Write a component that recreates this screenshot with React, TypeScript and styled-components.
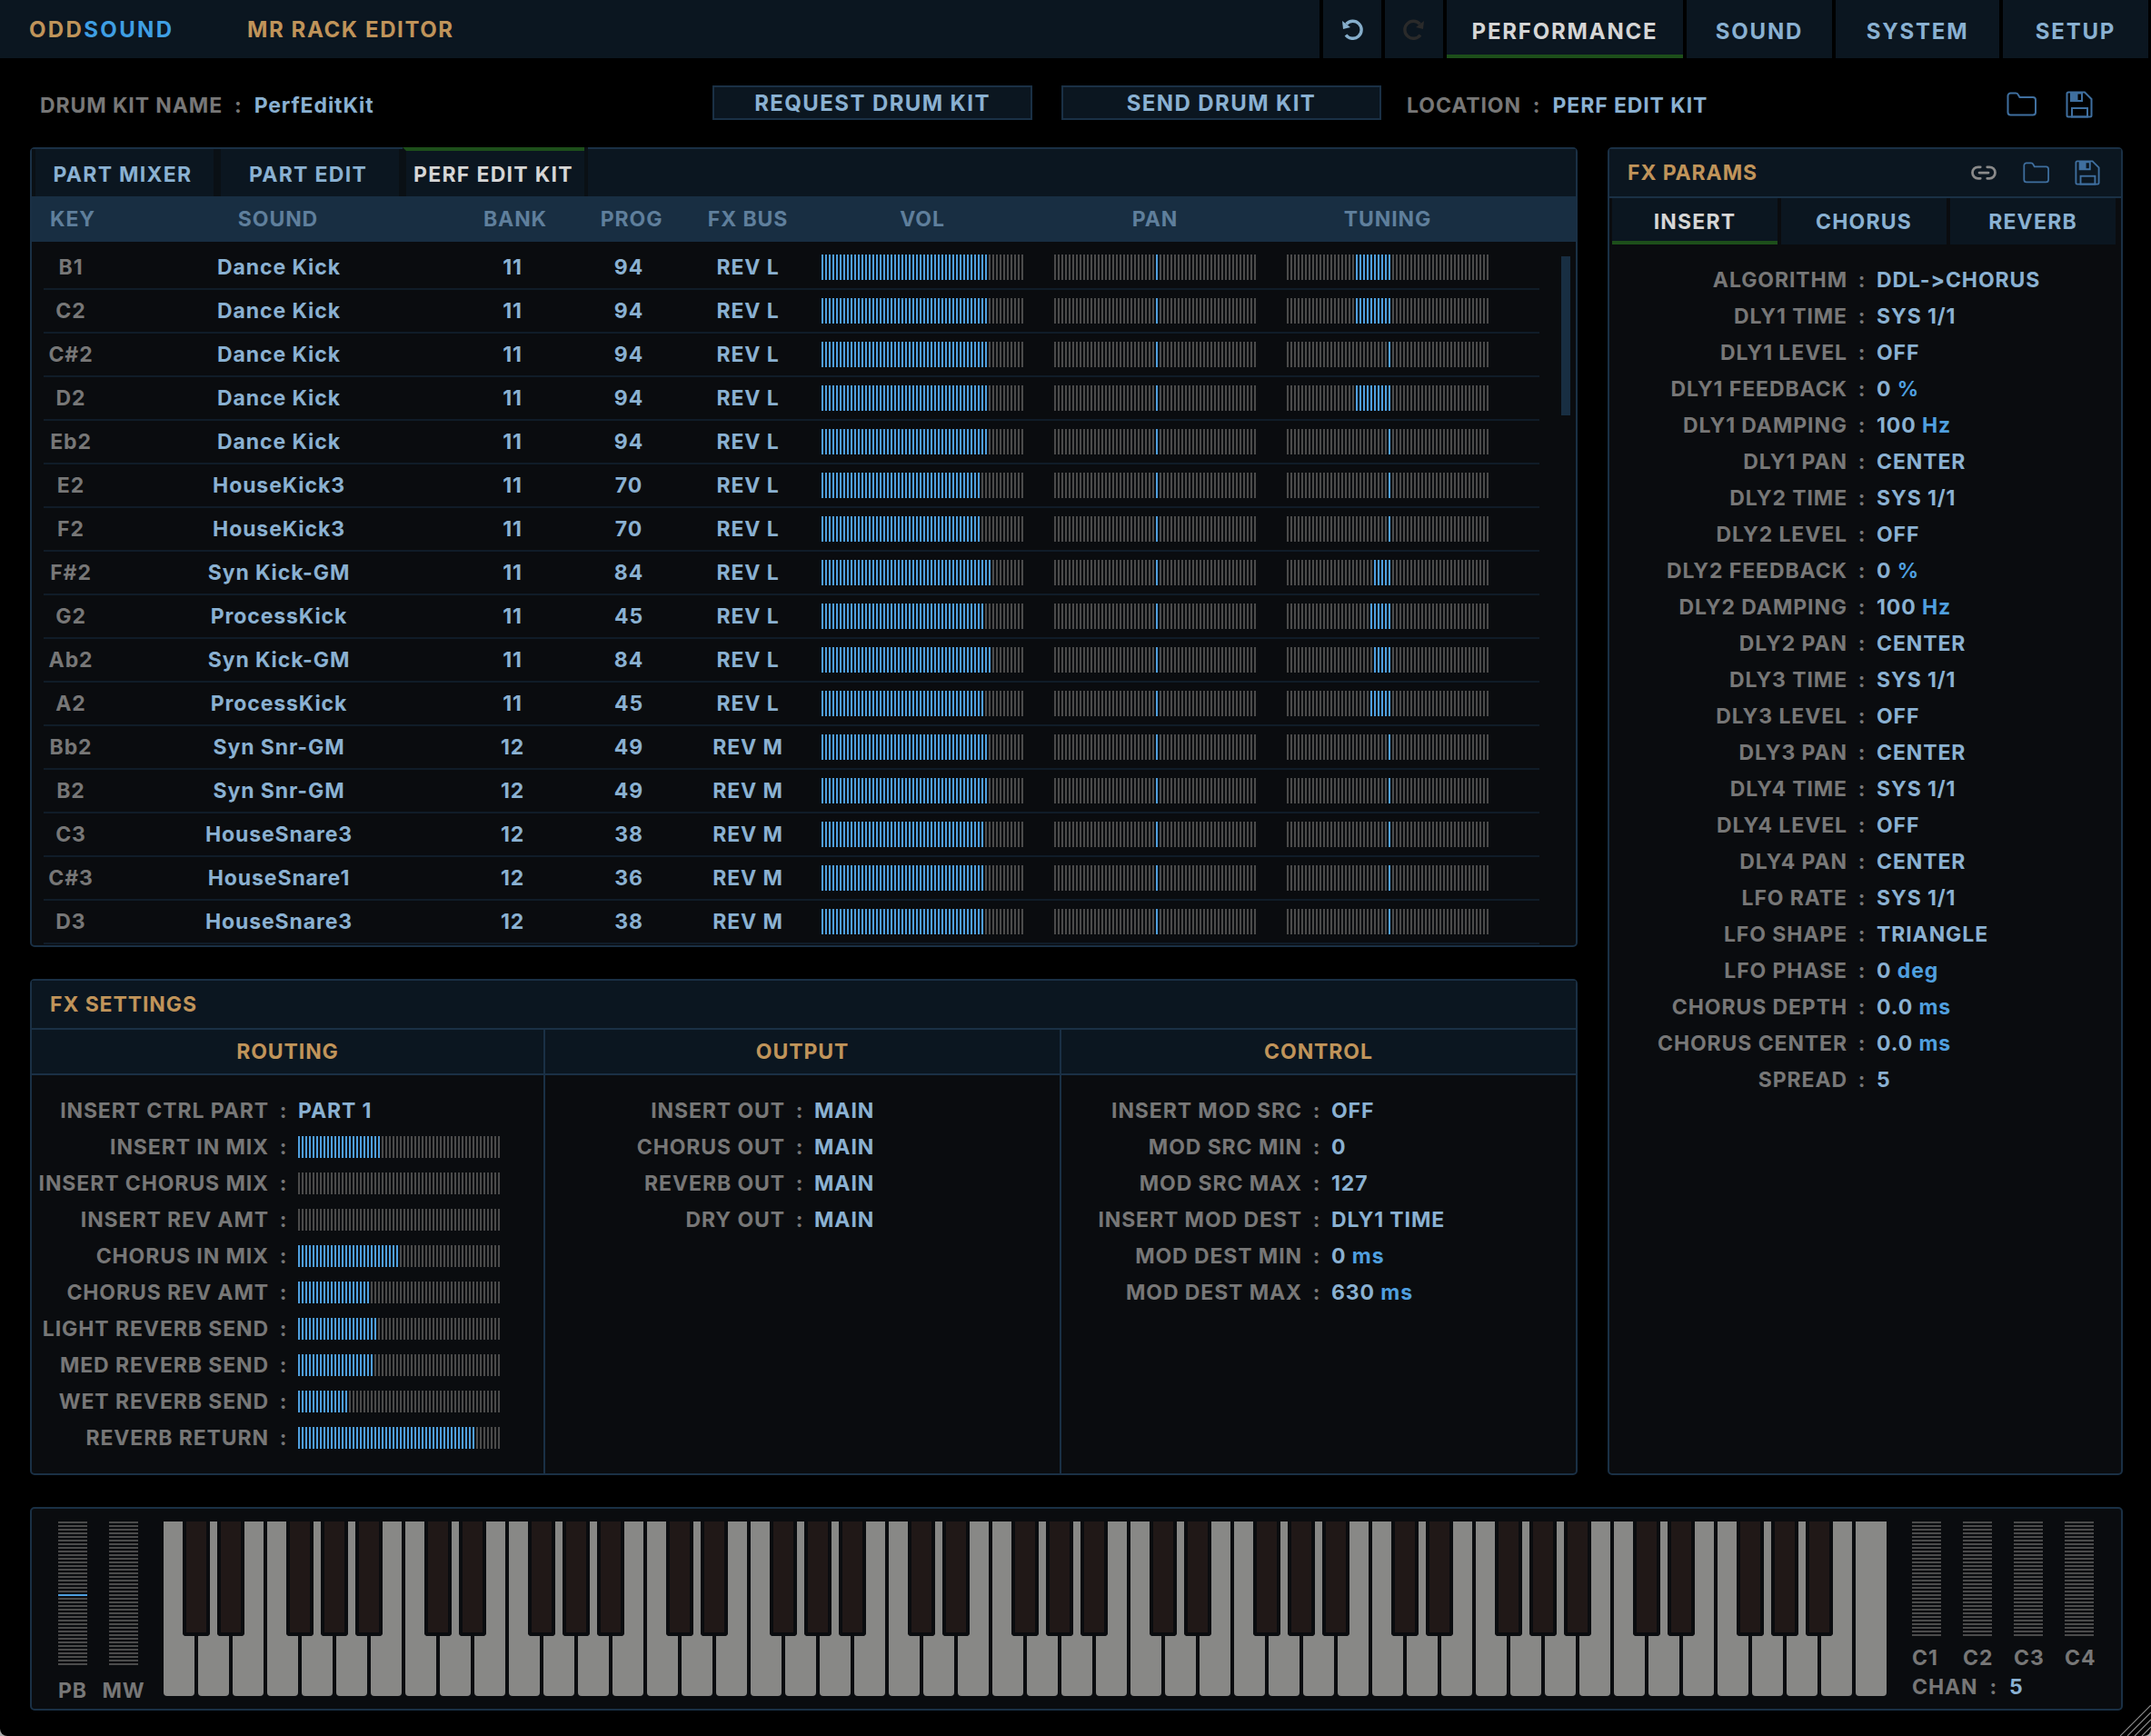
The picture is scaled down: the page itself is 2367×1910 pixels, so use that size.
import styled, { createGlobalStyle } from "styled-components";

const Global = createGlobalStyle`
  html, body {
    margin: 0;
    background: #a8a8a8;
  }
  * {
    box-sizing: border-box;
  }
`;

const TICK = "#4b4b4b";
const BLUE = "#4f9fdf";
const LINE = "#1a3045";
const BAR_BG = "#0b1620";
const BODY_BG = "#0a0c0f";
const VALUE = "#8ab1d2";
const LABEL = "#777777";
const ORANGE = "#c0945a";

const Window = styled.div`
  position: relative;
  width: 2367px;
  height: 1910px;
  background: #000;
  border-radius: 0 0 8px 8px;
  overflow: hidden;
  font-family: Inter, "Liberation Sans", sans-serif;
  font-weight: 700;
  font-size: 23px;
  letter-spacing: 0.9px;
  color: ${LABEL};
`;

const TopBar = styled.header`
  display: flex;
  gap: 4px;
  height: 64px;
  padding-right: 3px;
`;

const TitleArea = styled.div`
  flex: 1;
  display: flex;
  align-items: center;
  padding: 1px 0 0 32px;
  background: ${BAR_BG};
  font-size: 24px;
  letter-spacing: 1.6px;
  color: ${ORANGE};
`;

const Logo = styled.span`
  width: 240px;
  letter-spacing: 2.35px;
  span {
    color: #3f9fe4;
  }
`;

const NavIcon = styled.button`
  display: flex;
  align-items: center;
  justify-content: center;
  width: 64px;
  padding: 0;
  border: 0;
  background: ${BAR_BG};
`;

const NavTab = styled.button<{ $w: number; $active?: boolean }>`
  width: ${(p) => p.$w}px;
  padding: 8px 0 0;
  border: 0;
  border-bottom: 4px solid ${(p) => (p.$active ? "#1d4f1a" : BAR_BG)};
  background: ${BAR_BG};
  font: inherit;
  font-size: 24px;
  letter-spacing: 1.8px;
  color: ${(p) => (p.$active ? "#d6d6d6" : VALUE)};
`;

const KitBar = styled.div`
  display: flex;
  align-items: center;
  height: 98px;
  padding-left: 44px;
`;

const KitInfo = styled.div<{ $w?: number; $ml?: number }>`
  display: flex;
  flex: ${(p) => (p.$w ? `0 0 ${p.$w}px` : "1")};
  margin-left: ${(p) => p.$ml ?? 0}px;
  padding-top: 6px;
`;

const Colon = styled.span`
  margin: 0 13px;
`;

const Value = styled.span`
  color: ${VALUE};
`;

const Unit = styled.span`
  color: ${BLUE};
`;

const KitButton = styled.button`
  width: 352px;
  height: 38px;
  margin-right: 32px;
  padding: 0;
  border: 2px solid ${LINE};
  background: ${BAR_BG};
  font: inherit;
  font-size: 24px;
  letter-spacing: 1.4px;
  color: ${VALUE};
`;

const KitIcons = styled.div`
  display: flex;
  align-items: center;
  gap: 32px;
  margin: 3px 64px 0 -4px;
`;

const Main = styled.div`
  display: flex;
  gap: 33px;
  height: 1461px;
  padding-left: 33px;
`;

const LeftColumn = styled.div`
  display: flex;
  flex-direction: column;
  gap: 35px;
  width: 1703px;
`;

const Panel = styled.section<{ $h?: number; $w?: number }>`
  display: flex;
  flex-direction: column;
  ${(p) => (p.$h ? `height: ${p.$h}px;` : "")}
  ${(p) => (p.$w ? `width: ${p.$w}px;` : "")}
  border: 2px solid ${LINE};
  border-radius: 5px;
  background: ${BODY_BG};
`;

const TabBar = styled.div`
  display: flex;
  flex: 0 0 52px;
  background: ${BAR_BG};
`;

const PartTab = styled.button<{ $w: number; $ml?: number; $active?: boolean }>`
  width: ${(p) => p.$w}px;
  margin-left: ${(p) => p.$ml ?? 0}px;
  margin-top: ${(p) => (p.$active ? "-2px" : "0")};
  padding: ${(p) => (p.$active ? "2px" : "4px")} 4px 0 0;
  border: 0;
  border-top: ${(p) => (p.$active ? "4px solid #1d4f1a" : "0")};
  border-left: 4px solid #0a1015;
  background: ${BAR_BG};
  font: inherit;
  letter-spacing: 1.3px;
  color: ${(p) => (p.$active ? "#d6d6d6" : VALUE)};
  box-shadow: 4px 0 0 #0a1015;
`;

const HeadRow = styled.div`
  display: flex;
  align-items: center;
  flex: 0 0 50px;
  padding-left: 13px;
  background: #182e42;
  color: #5f7f9c;
`;

const Cell = styled.div<{ $w: number; $tone?: "key" | "value" }>`
  flex: 0 0 ${(p) => p.$w}px;
  text-align: center;
  color: ${(p) => (p.$tone === "key" ? LABEL : p.$tone === "value" ? VALUE : "inherit")};
`;

const BarGroup = styled.div<{ $ml: number }>`
  display: grid;
  grid-template-columns: repeat(3, 222px);
  column-gap: 34px;
  margin-left: ${(p) => p.$ml}px;
  text-align: center;
`;

const TableBody = styled.div`
  position: relative;
  flex: 1;
  padding: 5px 40px 0 13px;
`;

const TableRow = styled.div`
  display: flex;
  align-items: center;
  height: 48px;
  border-bottom: 2px solid #101c28;
`;

const Scroll = styled.div`
  position: absolute;
  top: 16px;
  right: 6px;
  width: 10px;
  height: 175px;
  background: #182e42;
`;

const Track = styled.div<{ $h: number; $w?: number }>`
  position: relative;
  width: ${(p) => p.$w ?? 222}px;
  height: ${(p) => p.$h}px;
  background: repeating-linear-gradient(90deg, ${TICK} 0 2px, transparent 2px 4px);
`;

const Fill = styled.div`
  position: absolute;
  top: 0;
  bottom: 0;
  background: repeating-linear-gradient(90deg, ${BLUE} 0 2px, transparent 2px 4px);
`;

const PanelTitle = styled.div`
  display: flex;
  align-items: center;
  flex: 0 0 54px;
  padding-left: 20px;
  border-bottom: 2px solid ${LINE};
  background: ${BAR_BG};
  color: ${ORANGE};
`;

const Columns = styled.div`
  display: grid;
  flex: 1;
  grid-template-columns: 563px 568px 1fr;
`;

const Column = styled.div<{ $divider?: boolean }>`
  display: flex;
  flex-direction: column;
  border-left: ${(p) => (p.$divider ? `2px solid ${LINE}` : "0")};
`;

const ColumnHead = styled.div`
  flex: 0 0 50px;
  border-bottom: 2px solid ${LINE};
  background: ${BAR_BG};
  color: ${ORANGE};
  line-height: 48px;
  text-align: center;
`;

const ParamList = styled.div`
  padding-top: 19px;
`;

const ParamRow = styled.div<{ $labelW: number }>`
  display: grid;
  grid-template-columns: ${(p) => p.$labelW}px 32px 1fr;
  align-items: center;
  height: 40px;
  white-space: pre;
`;

const ParamLabel = styled.span`
  text-align: right;
`;

const ParamColon = styled.span`
  text-align: center;
`;

const TitleIcons = styled.div`
  display: flex;
  align-items: center;
  gap: 28px;
  margin-left: auto;
  margin-right: 23px;
`;

const FxTabs = styled.div`
  display: flex;
  flex: 0 0 51px;
  gap: 4px;
  padding-left: 3px;
`;

const FxTab = styled.button<{ $active?: boolean }>`
  width: 182px;
  padding: 4px 0 0;
  border: 0;
  border-bottom: 4px solid ${(p) => (p.$active ? "#1d4f1a" : BAR_BG)};
  background: ${BAR_BG};
  font: inherit;
  letter-spacing: 1.2px;
  color: ${(p) => (p.$active ? "#d6d6d6" : VALUE)};
`;

const KeyboardPanel = styled.section`
  display: flex;
  width: 2303px;
  height: 224px;
  margin: 35px 0 0 33px;
  padding: 14px 0 0 29px;
  border: 2px solid ${LINE};
  border-radius: 5px;
  background: ${BODY_BG};
`;

const Wheels = styled.div`
  display: grid;
  grid-template-columns: 32px 32px;
  column-gap: 24px;
  width: 116px;
  justify-items: center;
  align-content: start;
`;

const HTicks = styled.div<{ $h: number }>`
  position: relative;
  width: 32px;
  height: ${(p) => p.$h}px;
  background: repeating-linear-gradient(180deg, ${TICK} 0 2px, transparent 2px 4px);
`;

const WheelMark = styled.div`
  position: absolute;
  left: 0;
  right: 0;
  height: 2px;
  background: ${BLUE};
`;

const WheelName = styled.div`
  margin-top: 15px;
  line-height: 26px;
  text-align: center;
`;

const Keys = styled.div`
  position: relative;
  display: flex;
  gap: 4px;
  height: 192px;
`;

const WhiteKey = styled.div`
  width: 34px;
  border-radius: 0 0 4px 4px;
  background: #888886;
`;

const BlackKey = styled.div`
  position: absolute;
  top: 0;
  width: 30px;
  height: 126px;
  border: 4px solid #0a0c0f;
  border-top: 0;
  border-radius: 0 0 4px 4px;
  background: #201817;
`;

const Meters = styled.div`
  display: flex;
  flex-direction: column;
  margin-left: 28px;
`;

const MeterGrid = styled.div`
  display: grid;
  grid-template-columns: repeat(4, 32px);
  column-gap: 24px;
`;

const MeterName = styled.div`
  margin-top: 11px;
  line-height: 26px;
  white-space: nowrap;
`;

const ChanRow = styled.div`
  display: flex;
  margin-top: 6px;
  line-height: 26px;
`;

const Grip = styled.svg`
  position: absolute;
  right: 0;
  bottom: 0;
`;

const Folder = ({ w }: { w: number }) => (
  <svg width={w} height={(w * 27) / 33} viewBox="0 0 33 27" fill="none" stroke="#3f6f9f" strokeWidth="2">
    <path d="M1.5 4.5A3 3 0 0 1 4.5 1.5H10A3 3 0 0 1 13 3.5L14.5 6H29A3 3 0 0 1 32 9V22.5A3 3 0 0 1 29 25.5H4.5A3 3 0 0 1 1.5 22.5Z" />
  </svg>
);

const Save = ({ w }: { w: number }) => (
  <svg width={w} height={w} viewBox="0 0 30 30" fill="none" stroke="#3f6f9f" strokeWidth="2">
    <path d="M1.5 3A1.5 1.5 0 0 1 3 1.5H21L28.5 9V27A1.5 1.5 0 0 1 27 28.5H3A1.5 1.5 0 0 1 1.5 27Z" />
    <path d="M5 1.5H19V12H5ZM13.5 3.5V10H17V3.5Z" fill="#3f6f9f" fillRule="evenodd" stroke="none" />
    <rect x="7" y="19" width="17" height="9.5" />
  </svg>
);

const LinkIcon = () => (
  <svg width="30" height="30" viewBox="0 0 24 24" fill="none" stroke="#8a8a8a" strokeWidth="2.2" strokeLinecap="round">
    <path d="M9 17H7A5 5 0 0 1 7 7h2" />
    <path d="M15 7h2a5 5 0 1 1 0 10h-2" />
    <path d="M8 12h8" />
  </svg>
);

const Turn = ({ color, flip }: { color: string; flip?: boolean }) => (
  <svg width="24" height="24" viewBox="0 0 24 24" fill="none" transform={flip ? "scale(-1 1)" : undefined}>
    <path d="M5.5 6.5A9.5 9.5 0 1 1 5 18.5" stroke={color} strokeWidth="3.4" />
    <polygon points="1,3 2,12 10,10" fill={color} />
  </svg>
);

type Row = { key: string; sound: string; bank: number; prog: number; bus: string; vol: number; tune: number };

const rows: Row[] = [
  { key: "B1", sound: "Dance Kick", bank: 11, prog: 94, bus: "REV L", vol: 182, tune: 76 },
  { key: "C2", sound: "Dance Kick", bank: 11, prog: 94, bus: "REV L", vol: 182, tune: 76 },
  { key: "C#2", sound: "Dance Kick", bank: 11, prog: 94, bus: "REV L", vol: 182, tune: 112 },
  { key: "D2", sound: "Dance Kick", bank: 11, prog: 94, bus: "REV L", vol: 182, tune: 76 },
  { key: "Eb2", sound: "Dance Kick", bank: 11, prog: 94, bus: "REV L", vol: 182, tune: 112 },
  { key: "E2", sound: "HouseKick3", bank: 11, prog: 70, bus: "REV L", vol: 174, tune: 112 },
  { key: "F2", sound: "HouseKick3", bank: 11, prog: 70, bus: "REV L", vol: 174, tune: 112 },
  { key: "F#2", sound: "Syn Kick-GM", bank: 11, prog: 84, bus: "REV L", vol: 186, tune: 96 },
  { key: "G2", sound: "ProcessKick", bank: 11, prog: 45, bus: "REV L", vol: 178, tune: 92 },
  { key: "Ab2", sound: "Syn Kick-GM", bank: 11, prog: 84, bus: "REV L", vol: 186, tune: 96 },
  { key: "A2", sound: "ProcessKick", bank: 11, prog: 45, bus: "REV L", vol: 178, tune: 92 },
  { key: "Bb2", sound: "Syn Snr-GM", bank: 12, prog: 49, bus: "REV M", vol: 182, tune: 112 },
  { key: "B2", sound: "Syn Snr-GM", bank: 12, prog: 49, bus: "REV M", vol: 182, tune: 112 },
  { key: "C3", sound: "HouseSnare3", bank: 12, prog: 38, bus: "REV M", vol: 178, tune: 112 },
  { key: "C#3", sound: "HouseSnare1", bank: 12, prog: 36, bus: "REV M", vol: 178, tune: 112 },
  { key: "D3", sound: "HouseSnare3", bank: 12, prog: 38, bus: "REV M", vol: 178, tune: 112 },
];

const routing: [string, string | number][] = [
  ["INSERT CTRL PART", "PART 1"],
  ["INSERT IN MIX", 90],
  ["INSERT CHORUS MIX", 0],
  ["INSERT REV AMT", 0],
  ["CHORUS IN MIX", 110],
  ["CHORUS REV AMT", 78],
  ["LIGHT REVERB SEND", 86],
  ["MED REVERB SEND", 82],
  ["WET REVERB SEND", 54],
  ["REVERB RETURN", 194],
];

const output = [
  ["INSERT OUT", "MAIN"],
  ["CHORUS OUT", "MAIN"],
  ["REVERB OUT", "MAIN"],
  ["DRY OUT", "MAIN"],
];

const control = [
  ["INSERT MOD SRC", "OFF"],
  ["MOD SRC MIN", "0"],
  ["MOD SRC MAX", "127"],
  ["INSERT MOD DEST", "DLY1 TIME"],
  ["MOD DEST MIN", "0", "ms"],
  ["MOD DEST MAX", "630", "ms"],
];

const fxParams = [
  ["ALGORITHM", "DDL->CHORUS"],
  ["DLY1 TIME", "SYS 1/1"],
  ["DLY1 LEVEL", "OFF"],
  ["DLY1 FEEDBACK", "0", "%"],
  ["DLY1 DAMPING", "100", "Hz"],
  ["DLY1 PAN", "CENTER"],
  ["DLY2 TIME", "SYS 1/1"],
  ["DLY2 LEVEL", "OFF"],
  ["DLY2 FEEDBACK", "0", "%"],
  ["DLY2 DAMPING", "100", "Hz"],
  ["DLY2 PAN", "CENTER"],
  ["DLY3 TIME", "SYS 1/1"],
  ["DLY3 LEVEL", "OFF"],
  ["DLY3 PAN", "CENTER"],
  ["DLY4 TIME", "SYS 1/1"],
  ["DLY4 LEVEL", "OFF"],
  ["DLY4 PAN", "CENTER"],
  ["LFO RATE", "SYS 1/1"],
  ["LFO SHAPE", "TRIANGLE"],
  ["LFO PHASE", "0", "deg"],
  ["CHORUS DEPTH", "0.0", "ms"],
  ["CHORUS CENTER", "0.0", "ms"],
  ["SPREAD", "5"],
];

const Slider = ({ h, from, to }: { h: number; from: number; to: number }) => (
  <Track $h={h}>
    <Fill style={{ left: from, width: to - from }} />
  </Track>
);

const TextParams = ({ list, labelW }: { list: string[][]; labelW: number }) => (
  <ParamList>
    {list.map(([label, value, unit]) => (
      <ParamRow key={label} $labelW={labelW}>
        <ParamLabel>{label}</ParamLabel>
        <ParamColon>:</ParamColon>
        <Value>
          {value}
          {unit ? <Unit> {unit}</Unit> : null}
        </Value>
      </ParamRow>
    ))}
  </ParamList>
);

const hasBlack = (i: number) => [0, 1, 3, 4, 5].includes(i % 7);

const App = () => {
  const whites = Array.from({ length: 50 }, (_, i) => i);
  return (
    <Window>
      <Global />
      <TopBar>
        <TitleArea>
          <Logo>
            ODD<span>SOUND</span>
          </Logo>
          MR RACK EDITOR
        </TitleArea>
        <NavIcon>
          <Turn color="#86aecb" />
        </NavIcon>
        <NavIcon>
          <Turn color="#2a2a2a" flip />
        </NavIcon>
        <NavTab $w={260} $active>
          PERFORMANCE
        </NavTab>
        <NavTab $w={160}>SOUND</NavTab>
        <NavTab $w={180}>SYSTEM</NavTab>
        <NavTab $w={160}>SETUP</NavTab>
      </TopBar>

      <KitBar>
        <KitInfo $w={740}>
          DRUM KIT NAME
          <Colon>:</Colon>
          <Value>PerfEditKit</Value>
        </KitInfo>
        <KitButton>REQUEST DRUM KIT</KitButton>
        <KitButton>SEND DRUM KIT</KitButton>
        <KitInfo $ml={-4}>
          LOCATION
          <Colon>:</Colon>
          <Value>PERF EDIT KIT</Value>
        </KitInfo>
        <KitIcons>
          <Folder w={33} />
          <Save w={30} />
        </KitIcons>
      </KitBar>

      <Main>
        <LeftColumn>
          <Panel $h={880}>
            <TabBar>
              <PartTab $w={200}>PART MIXER</PartTab>
              <PartTab $w={200} $ml={4}>
                PART EDIT
              </PartTab>
              <PartTab $w={200} $ml={4} $active>
                PERF EDIT KIT
              </PartTab>
            </TabBar>
            <HeadRow>
              <Cell $w={64}>KEY</Cell>
              <Cell $w={388}>SOUND</Cell>
              <Cell $w={134}>BANK</Cell>
              <Cell $w={122}>PROG</Cell>
              <Cell $w={134}>FX BUS</Cell>
              <BarGroup $ml={14}>
                <span>VOL</span>
                <span>PAN</span>
                <span>TUNING</span>
              </BarGroup>
            </HeadRow>
            <TableBody>
              {rows.map((r) => (
                <TableRow key={r.key}>
                  <Cell $w={60} $tone="key">
                    {r.key}
                  </Cell>
                  <Cell $w={398} $tone="value">
                    {r.sound}
                  </Cell>
                  <Cell $w={116} $tone="value">
                    {r.bank}
                  </Cell>
                  <Cell $w={140} $tone="value">
                    {r.prog}
                  </Cell>
                  <Cell $w={122} $tone="value">
                    {r.bus}
                  </Cell>
                  <BarGroup $ml={20}>
                    <Slider h={28} from={0} to={r.vol} />
                    <Slider h={28} from={112} to={114} />
                    <Slider h={28} from={r.tune} to={114} />
                  </BarGroup>
                </TableRow>
              ))}
              <Scroll />
            </TableBody>
          </Panel>

          <Panel $h={546}>
            <PanelTitle>FX SETTINGS</PanelTitle>
            <Columns>
              <Column>
                <ColumnHead>ROUTING</ColumnHead>
                <ParamList>
                  {routing.map(([label, value]) => (
                    <ParamRow key={label} $labelW={261}>
                      <ParamLabel>{label}</ParamLabel>
                      <ParamColon>:</ParamColon>
                      {typeof value === "string" ? <Value>{value}</Value> : <Slider h={24} from={0} to={value} />}
                    </ParamRow>
                  ))}
                </ParamList>
              </Column>
              <Column $divider>
                <ColumnHead>OUTPUT</ColumnHead>
                <TextParams list={output} labelW={264} />
              </Column>
              <Column $divider>
                <ColumnHead>CONTROL</ColumnHead>
                <TextParams list={control} labelW={265} />
              </Column>
            </Columns>
          </Panel>
        </LeftColumn>

        <Panel $w={567}>
          <PanelTitle>
            FX PARAMS
            <TitleIcons>
              <LinkIcon />
              <Folder w={29} />
              <Save w={28} />
            </TitleIcons>
          </PanelTitle>
          <FxTabs>
            <FxTab $active>INSERT</FxTab>
            <FxTab>CHORUS</FxTab>
            <FxTab>REVERB</FxTab>
          </FxTabs>
          <TextParams list={fxParams} labelW={262} />
        </Panel>
      </Main>

      <KeyboardPanel>
        <Wheels>
          <HTicks $h={158}>
            <WheelMark style={{ top: 80 }} />
          </HTicks>
          <HTicks $h={158} />
          <WheelName>PB</WheelName>
          <WheelName>MW</WheelName>
        </Wheels>
        <Keys>
          {whites.map((i) => (
            <WhiteKey key={i} />
          ))}
          {whites
            .filter((i) => i < 49 && hasBlack(i))
            .map((i) => (
              <BlackKey key={i} style={{ left: 38 * (i + 1) - 17 }} />
            ))}
        </Keys>
        <Meters>
          <MeterGrid>
            <HTicks $h={126} />
            <HTicks $h={126} />
            <HTicks $h={126} />
            <HTicks $h={126} />
            <MeterName>C1</MeterName>
            <MeterName>C2</MeterName>
            <MeterName>C3</MeterName>
            <MeterName>C4</MeterName>
          </MeterGrid>
          <ChanRow>
            CHAN
            <Colon>:</Colon>
            <Value>5</Value>
          </ChanRow>
        </Meters>
      </KeyboardPanel>

      <Grip width="34" height="34" viewBox="0 0 34 34" stroke="#8a8a8a" strokeWidth="1.2">
        <path d="M0 34L34 0M8 34L34 8M16 34L34 16M24 34L34 24" />
      </Grip>
    </Window>
  );
};

export default App;
